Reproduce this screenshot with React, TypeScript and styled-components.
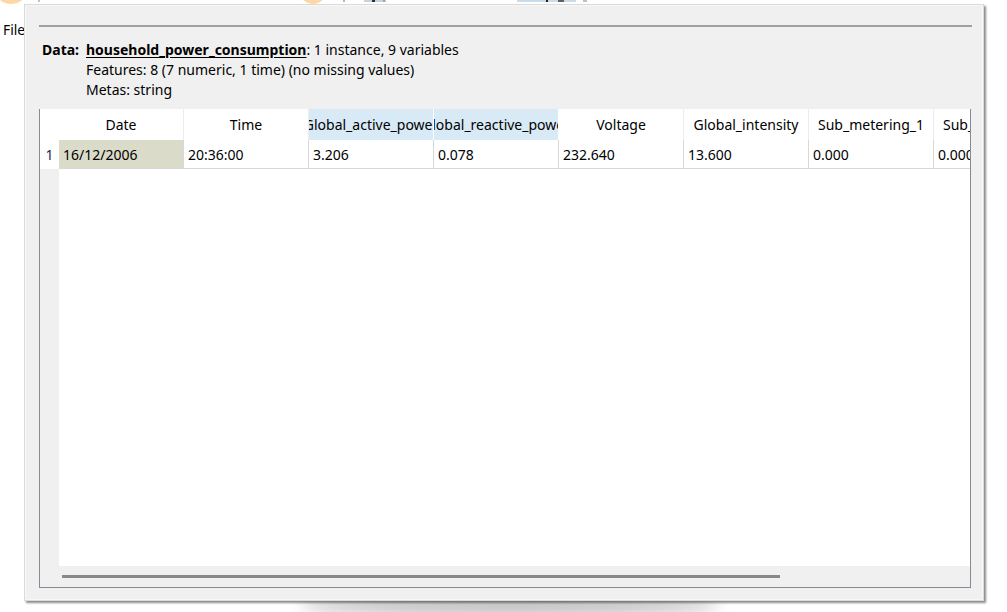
import React from "react";
import styled, { createGlobalStyle } from "styled-components";

const Global = createGlobalStyle`
  html, body { margin: 0; padding: 0; background: #ffffff; }
  body { font-family: "Noto Sans", "Open Sans", sans-serif; color: #111; }
  #root { width: 1007px; height: 612px; }
`;

const Desktop = styled.div`
  position: relative;
  width: 1007px;
  height: 612px;
  overflow: hidden;
  background: #ffffff;
`;

const BackStrip = styled.div`
  position: absolute;
  left: 0;
  top: 0;
  width: 1007px;
  height: 4px;
  overflow: hidden;
`;

const Blob = styled.div<{ $x: number; $w: number; $c: string; $round?: boolean }>`
  position: absolute;
  left: ${(p) => p.$x}px;
  top: ${(p) => (p.$round ? -22 : 0)}px;
  width: ${(p) => p.$w}px;
  height: ${(p) => (p.$round ? 26 : 2)}px;
  border-radius: ${(p) => (p.$round ? "50%" : "0")};
  background: ${(p) => p.$c};
`;

const FileMenu = styled.div`
  position: absolute;
  left: 3px;
  top: 20px;
  font-size: 13.8px;
  line-height: 20px;
  color: #000;
`;

const FloorShadow = styled.div`
  position: absolute;
  left: 300px;
  top: 597px;
  width: 420px;
  height: 18px;
  border-radius: 50%;
  background: rgba(0, 0, 0, 0.25);
  filter: blur(7px);
`;

const Window = styled.div`
  position: absolute;
  left: 24px;
  top: 4px;
  width: 960px;
  height: 597px;
  border: 1px solid #dadada;
  background: #f0f0f0;
  box-shadow: inset 0 0 0 1px #f7f7f7, 2px 2px 2px rgba(0, 0, 0, 0.45);
  display: flex;
  flex-direction: column;
  padding: 20px 12px 12px 14px;
  box-sizing: border-box;
`;

const Rule = styled.div`
  height: 2px;
  background: #a0a0a0;
  margin-right: -1px;
  flex: none;
`;

const Info = styled.div`
  margin-top: 13px;
  padding-left: 3px;
  display: grid;
  grid-template-columns: 44px auto;
  font-size: 14px;
  line-height: 20px;
  color: #000;
`;

const Label = styled.div`
  font-weight: 700;
`;

const Lines = styled.div`
  display: flex;
  flex-direction: column;
`;

const DataName = styled.span`
  font-weight: 700;
  text-decoration: underline;
  text-underline-offset: 2px;
`;

const Table = styled.div`
  margin-top: 9px;
  flex: 1;
  border: 1px solid #868a93;
  border-top: none;
  background: #ffffff;
  display: flex;
  flex-direction: column;
  overflow: hidden;
  font-size: 14px;
`;

const Body = styled.div`
  flex: 1;
  display: flex;
  overflow: hidden;
`;

const VHeader = styled.div`
  width: 19px;
  flex: none;
  display: flex;
  flex-direction: column;
  background: #f0f0f0;
`;

const Corner = styled.div`
  height: 31px;
  background: #ffffff;
`;

const RowNum = styled.div`
  height: 29px;
  background: #ffffff;
  display: flex;
  align-items: center;
  justify-content: center;
  box-sizing: border-box;
  color: #1b2a4a;
`;

const Grid = styled.div`
  flex: 1;
  display: flex;
  flex-direction: column;
  overflow: hidden;
`;

const Row = styled.div<{ $head?: boolean }>`
  display: flex;
  height: ${(p) => (p.$head ? 31 : 29)}px;
  flex: none;
`;

const HeadCell = styled.div<{ $sel?: boolean }>`
  width: 125px;
  flex: none;
  box-sizing: border-box;
  border-right: 1px solid ${(p) => (p.$sel ? "#ffffff" : "#ececec")};
  background: ${(p) => (p.$sel ? "#d9eaf7" : "#ffffff")};
  display: flex;
  justify-content: center;
  align-items: center;
  overflow: hidden;
  white-space: nowrap;
  color: #000;
`;

const Cell = styled.div<{ $hl?: boolean }>`
  width: 125px;
  flex: none;
  box-sizing: border-box;
  border-right: 1px solid #d8d8d8;
  border-bottom: 1px solid #d8d8d8;
  background: ${(p) => (p.$hl ? "#dbdbc9" : "#ffffff")};
  display: flex;
  align-items: center;
  padding-left: 4px;
  overflow: hidden;
  white-space: nowrap;
  color: #000;
`;

const ScrollArea = styled.div`
  height: 21px;
  flex: none;
  background: #f0f0f0;
  display: flex;
  align-items: center;
  padding-left: 22px;
`;

const ScrollHandle = styled.div`
  width: 718px;
  height: 3px;
  background: #888888;
  margin-top: -1px;
`;

const columns = [
  "Date",
  "Time",
  "Global_active_power",
  "Global_reactive_power",
  "Voltage",
  "Global_intensity",
  "Sub_metering_1",
  "Sub_metering_2",
];

const values = ["16/12/2006", "20:36:00", "3.206", "0.078", "232.640", "13.600", "0.000", "0.000"];

export default function App() {
  return (
    <Desktop>
      <Global />
      <BackStrip>
        <Blob $x={-4} $w={30} $c="#fdd8a6" $round />
        <Blob $x={38} $w={2} $c="#b8c4d0" />
        <Blob $x={300} $w={26} $c="#fdd8a6" $round />
        <Blob $x={343} $w={2} $c="#b0b8c0" />
        <Blob $x={364} $w={22} $c="#c6d4e0" />
        <Blob $x={372} $w={3} $c="#303030" />
        <Blob $x={383} $w={2} $c="#9aa4ae" />
        <Blob $x={517} $w={59} $c="#c8dcec" />
        <Blob $x={546} $w={2} $c="#202020" />
        <Blob $x={558} $w={6} $c="#606060" />
        <Blob $x={583} $w={4} $c="#c0c0c0" />
      </BackStrip>
      <FileMenu>File</FileMenu>
      <FloorShadow />
      <Window>
        <Rule />
        <Info>
          <Label>Data:</Label>
          <Lines>
            <div>
              <DataName>household_power_consumption</DataName>: 1 instance, 9 variables
            </div>
            <div>Features: 8 (7 numeric, 1 time) (no missing values)</div>
            <div>Metas: string</div>
          </Lines>
        </Info>
        <Table>
          <Body>
            <VHeader>
              <Corner />
              <RowNum>1</RowNum>
            </VHeader>
            <Grid>
              <Row $head>
                {columns.map((c, i) => (
                  <HeadCell key={c} $sel={i === 2 || i === 3}>
                    {c}
                  </HeadCell>
                ))}
              </Row>
              <Row>
                {values.map((v, i) => (
                  <Cell key={i} $hl={i === 0}>
                    {v}
                  </Cell>
                ))}
              </Row>
            </Grid>
          </Body>
          <ScrollArea>
            <ScrollHandle />
          </ScrollArea>
        </Table>
      </Window>
    </Desktop>
  );
}
